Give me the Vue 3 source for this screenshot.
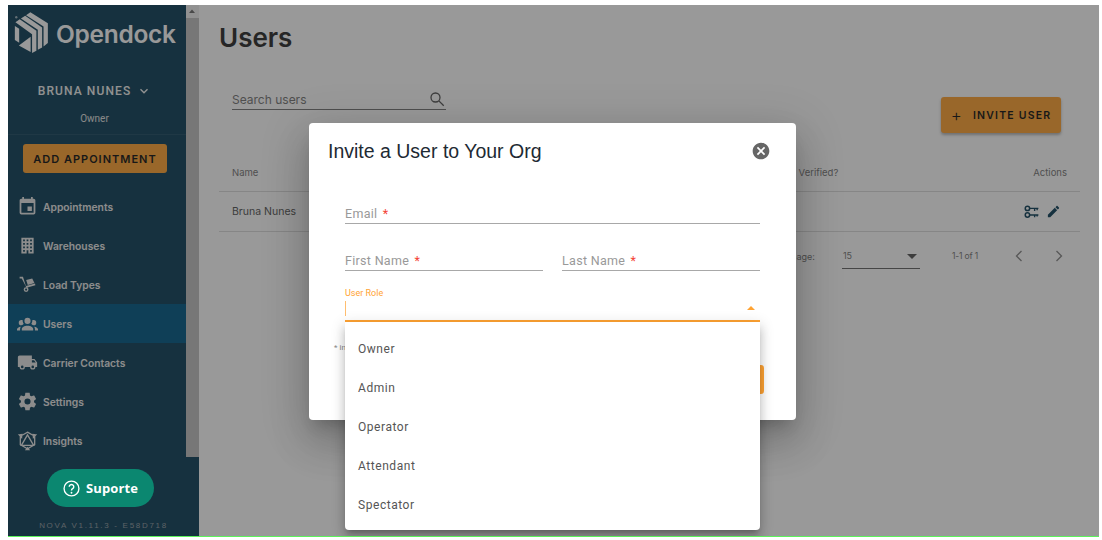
<script setup>
const navItems = [
  { label: 'Appointments', icon: 'M19,19H5V8H19M16,1V3H8V1H6V3H5C3.89,3 3,3.89 3,5V19A2,2 0 0,0 5,21H19A2,2 0 0,0 21,19V5C21,3.89 20.1,3 19,3H18V1M17,12H12V17H17V12Z' },
  { label: 'Warehouses', icon: 'M5,3V21H11V17.5H13V21H19V3H5M7,5H9V7H7V5M11,5H13V7H11V5M15,5H17V7H15V5M7,9H9V11H7V9M11,9H13V11H11V9M15,9H17V11H15V9M7,13H9V15H7V13M11,13H13V15H11V13M15,13H17V15H15V13M7,17H9V19H7V17M15,17H17V19H15V17Z' },
  { label: 'Load Types', icon: 'M3,3H6.8L10.2,13.6L20.6,10.8L21,12.8L10.9,15.6L5.4,5H3Z M10.5,6.8L17.4,5L19.9,10.2L12.3,12.5Z M10.4,15A2.8,2.8 0 1,1 10.4,20.6A2.8,2.8 0 1,1 10.4,15Z M10.4,16.6A1.2,1.2 0 1,0 10.4,19A1.2,1.2 0 1,0 10.4,16.6Z' },
  { label: 'Users', active: true, icon: 'M12,5.5A3.5,3.5 0 0,1 15.5,9A3.5,3.5 0 0,1 12,12.5A3.5,3.5 0 0,1 8.5,9A3.5,3.5 0 0,1 12,5.5M5,8C5.56,8 6.08,8.15 6.53,8.42C6.38,9.85 6.8,11.27 7.66,12.38C7.16,13.34 6.16,14 5,14A3,3 0 0,1 2,11A3,3 0 0,1 5,8M19,8A3,3 0 0,1 22,11A3,3 0 0,1 19,14C17.84,14 16.84,13.34 16.34,12.38C17.2,11.27 17.62,9.85 17.47,8.42C17.92,8.15 18.44,8 19,8M5.5,18.25C5.5,16.18 8.41,14.5 12,14.5C15.59,14.5 18.5,16.18 18.5,18.25V20H5.5V18.25M0,20V18.5C0,17.11 1.89,15.94 4.45,15.6C3.86,16.28 3.5,17.22 3.5,18.25V20H0M24,20H20.5V18.25C20.5,17.22 20.14,16.28 19.55,15.6C22.11,15.94 24,17.11 24,18.5V20Z' },
  { label: 'Carrier Contacts', icon: 'M18,18.5A1.5,1.5 0 0,1 16.5,17A1.5,1.5 0 0,1 18,15.5A1.5,1.5 0 0,1 19.5,17A1.5,1.5 0 0,1 18,18.5M19.5,9.5L21.46,12H17V9.5M6,18.5A1.5,1.5 0 0,1 4.5,17A1.5,1.5 0 0,1 6,15.5A1.5,1.5 0 0,1 7.5,17A1.5,1.5 0 0,1 6,18.5M20,8H17V4H3C1.89,4 1,4.89 1,6V17H3A3,3 0 0,0 6,20A3,3 0 0,0 9,17H15A3,3 0 0,0 18,20A3,3 0 0,0 21,17H23V12L20,8Z' },
  { label: 'Settings', icon: 'M12,15.5A3.5,3.5 0 0,1 8.5,12A3.5,3.5 0 0,1 12,8.5A3.5,3.5 0 0,1 15.5,12A3.5,3.5 0 0,1 12,15.5M19.43,12.97C19.47,12.65 19.5,12.33 19.5,12C19.5,11.67 19.47,11.34 19.43,11L21.54,9.37C21.73,9.22 21.78,8.95 21.66,8.73L19.66,5.27C19.54,5.05 19.27,4.96 19.05,5.05L16.56,6.05C16.04,5.66 15.5,5.32 14.87,5.07L14.5,2.42C14.46,2.18 14.25,2 14,2H10C9.75,2 9.54,2.18 9.5,2.42L9.13,5.07C8.5,5.32 7.96,5.66 7.44,6.05L4.95,5.05C4.73,4.96 4.46,5.05 4.34,5.27L2.34,8.73C2.21,8.95 2.27,9.22 2.46,9.37L4.57,11C4.53,11.34 4.5,11.67 4.5,12C4.5,12.33 4.53,12.65 4.57,12.97L2.46,14.63C2.27,14.78 2.21,15.05 2.34,15.27L4.34,18.73C4.46,18.95 4.73,19.03 4.95,18.95L7.44,17.94C7.96,18.34 8.5,18.68 9.13,18.93L9.5,21.58C9.54,21.82 9.75,22 10,22H14C14.25,22 14.46,21.82 14.5,21.58L14.87,18.93C15.5,18.67 16.04,18.34 16.56,17.94L19.05,18.95C19.27,19.03 19.54,18.95 19.66,18.73L21.66,15.27C21.78,15.05 21.73,14.78 21.54,14.63L19.43,12.97Z' },
  { label: 'Insights', icon: 'M12,2.5L20.2,7.2V16.8L12,21.5L3.8,16.8V7.2Z M12,5.5L19,17.5H5Z M2.5,5.5L5.5,5.2L5.2,8.5Z M21.5,5.5L18.5,5.2L18.8,8.5Z M12,20.5L13.5,22.5H10.5Z', stroke: true }
]
const roles = ['Owner', 'Admin', 'Operator', 'Attendant', 'Spectator']
</script>

<template>
  <div class="page">
    <div class="frame">
      <aside class="sidebar">
        <div class="side-scroll">
          <div class="side-content">
            <div class="brand">
              <svg class="logo" viewBox="12 8 122 130" preserveAspectRatio="none" width="35" height="43">
                <circle cx="20" cy="27" r="4" fill="#fff" opacity=".6" />
                <path d="M54,21L69,12L130,45V105L115,115V55Z" fill="#fff" />
                <path d="M36,31L51,22L110,58V118L95,125V65Z" fill="#fff" />
                <path d="M17,42L32,33L90,68V128L75,135V78Z" fill="#fff" />
                <path d="M15,53L30,62V104L15,96Z" fill="#fff" />
                <path d="M70,86V132L29,112Z" fill="#fff" />
              </svg>
              <span class="brand-name">Opendock</span>
            </div>
            <div class="user-name">
              BRUNA NUNES
              <svg viewBox="0 0 24 24" width="14" height="14"><path d="M6,9L12,15L18,9" fill="none" stroke="currentColor" stroke-width="2.4" /></svg>
            </div>
            <div class="user-role">Owner</div>
            <div class="add-wrap">
              <button class="add-btn">ADD APPOINTMENT</button>
            </div>
            <nav class="nav">
              <a v-for="item in navItems" :key="item.label" class="nav-item" :class="{ active: item.active }">
                <span class="nav-icon">
                  <svg viewBox="0 0 24 24" width="21" height="21">
                    <path v-if="item.stroke" :d="item.icon" fill="none" stroke="currentColor" stroke-width="1.5" />
                    <path v-else :d="item.icon" fill="currentColor" fill-rule="evenodd" />
                  </svg>
                </span>
                <span>{{ item.label }}</span>
              </a>
            </nav>
          </div>
          <div class="scrollbar">
            <svg viewBox="0 0 12 12" width="12" height="12"><path d="M3,8L6,4.5L9,8Z" fill="#6b6b6b" /></svg>
            <div class="thumb"></div>
          </div>
        </div>
        <div class="side-foot">
          <div class="pill-slot"></div>
          <div class="version">NOVA V1.11.3 - E58D718</div>
        </div>
      </aside>

      <main class="main">
        <h1 class="title">Users</h1>
        <div class="toolbar">
          <label class="search">
            <span>Search users</span>
            <svg viewBox="0 0 24 24" width="18" height="18"><circle cx="10" cy="10" r="6" fill="none" stroke="currentColor" stroke-width="1.7" /><path d="M14.5,14.5L21,21" stroke="currentColor" stroke-width="1.7" /></svg>
          </label>
          <button class="invite-btn"><span class="plus">+</span>INVITE USER</button>
        </div>
        <div class="table">
          <div class="thead">
            <span>Name</span>
            <span class="th-verified">Verified?</span>
            <span class="th-actions">Actions</span>
          </div>
          <div class="trow">
            <span>Bruna Nunes</span>
            <span class="row-actions">
              <svg viewBox="0 0 24 24" width="15" height="15">
                <path d="M5.5,3.5A3.5,3.5 0 1,1 5.5,10.5A3.5,3.5 0 1,1 5.5,3.5Z M5.5,14A3.5,3.5 0 1,1 5.5,21A3.5,3.5 0 1,1 5.5,14Z" fill="none" stroke="currentColor" stroke-width="2.4" />
                <path d="M9,7H23M17,7V11M21,7V10M9,17.5H23M17,17.5V21M21,17.5V20" fill="none" stroke="currentColor" stroke-width="2.2" />
              </svg>
              <svg viewBox="0 0 24 24" width="15" height="15"><path d="M20.71,7.04C21.1,6.65 21.1,6 20.71,5.63L18.37,3.29C18,2.9 17.35,2.9 16.96,3.29L15.12,5.12L18.87,8.87M3,17.25V21H6.75L17.81,9.93L14.06,6.18L3,17.25Z" fill="currentColor" /></svg>
            </span>
          </div>
          <div class="tfoot">
            <span>Rows per page:</span>
            <div class="per-page"><span>15</span><i class="tri"></i></div>
            <span class="range">1-1 of 1</span>
            <svg class="chev" viewBox="0 0 24 24" width="20" height="20"><path d="M15,6L9,12L15,18" fill="none" stroke="currentColor" stroke-width="1.6" /></svg>
            <svg class="chev" viewBox="0 0 24 24" width="20" height="20"><path d="M9,6L15,12L9,18" fill="none" stroke="currentColor" stroke-width="1.6" /></svg>
          </div>
        </div>
      </main>

      <div class="overlay"></div>

      <button class="support">
        <svg viewBox="0 0 24 24" width="17" height="17"><circle cx="12" cy="12" r="10.5" fill="none" stroke="currentColor" stroke-width="1.9" /><path d="M8.8,9.5A3.2,3.2 0 1,1 13.6,12.3C12.6,12.9 12,13.4 12,14.8" fill="none" stroke="currentColor" stroke-width="2" /><circle cx="12" cy="18" r="1.3" fill="currentColor" /></svg>
        Suporte
      </button>

      <section class="dialog">
        <header class="dialog-head">
          <h2>Invite a User to Your Org</h2>
          <svg viewBox="0 0 24 24" width="20" height="20"><path d="M12,2C17.53,2 22,6.47 22,12C22,17.53 17.53,22 12,22C6.47,22 2,17.53 2,12C2,6.47 6.47,2 12,2M15.59,7L12,10.59L8.41,7L7,8.41L10.59,12L7,15.59L8.41,17L12,13.41L15.59,17L17,15.59L13.41,12L17,8.41L15.59,7Z" fill="#666" /></svg>
        </header>
        <div class="form">
          <div class="field email">Email <b>*</b></div>
          <div class="name-row">
            <div class="field">First Name <b>*</b></div>
            <div class="field">Last Name <b>*</b></div>
          </div>
          <div class="role-field">
            <div class="role-label">User Role</div>
            <div class="role-input"><i class="cursor"></i><i class="tri up"></i></div>
          </div>
        </div>
        <footer class="dialog-foot">
          <span>* indicates required field</span>
          <button class="submit">Invite</button>
        </footer>
      </section>

      <ul class="menu">
        <li v-for="role in roles" :key="role">{{ role }}</li>
      </ul>
    </div>
  </div>
</template>

<style>
html, body { margin: 0; background: #fff; overflow: hidden; }
</style>

<style scoped>
.page {
  width: 1102px;
  height: 540px;
  box-sizing: border-box;
  padding: 5px 3px 3px 8px;
  background: #fff;
  font-family: Inter, "Liberation Sans", sans-serif;
}
.frame {
  position: relative;
  height: 100%;
  display: flex;
  box-sizing: border-box;
  border-bottom: 1px solid #5cf25c;
  overflow: hidden;
}
.overlay {
  position: absolute;
  inset: 0;
  background: rgba(33, 33, 33, .46);
}

/* sidebar */
.sidebar {
  width: 191px;
  flex: none;
  display: flex;
  flex-direction: column;
  background: #0e4059;
  color: #fff;
}
.side-scroll { height: 452px; display: flex; flex: none; overflow: hidden; }
.side-content { width: 178px; flex: none; display: flex; flex-direction: column; }
.side-content > * { flex: none; }
.brand { height: 58px; display: flex; align-items: flex-start; padding: 6px 0 0 6px; box-sizing: border-box; gap: 7px; color: #fff; }
.logo { flex: none; }
.brand-name { font-size: 24.5px; line-height: 40px; margin-top: 3px; font-weight: 600; letter-spacing: -.3px; color: #fff; }
.user-name {
  margin-top: 19px;
  padding-right: 5px;
  height: 18px;
  display: flex;
  align-items: center;
  justify-content: center;
  gap: 6px;
  font-family: Roboto, sans-serif;
  font-size: 12px;
  font-weight: 500;
  letter-spacing: 1.1px;
  color: #f0f0f0;
}
.user-role { margin-top: 12px; padding-right: 5px; text-align: center; font-size: 10px; line-height: 14px; color: #e0e0e0; font-family: Roboto, sans-serif; }
.add-wrap { margin-top: 8px; padding: 9px 0 0 15px; border-top: 1px solid rgba(255,255,255,.07); height: 53px; box-sizing: border-box; }
.add-btn {
  width: 144px;
  height: 29px;
  border: 0;
  border-radius: 3px;
  background: #ffa333;
  color: #111;
  font: 600 11px Inter, sans-serif;
  letter-spacing: 1px;
  padding: 0;
  display: block;
}
.nav { display: flex; flex-direction: column; }
.nav-item {
  height: 39px;
  flex: none;
  display: flex;
  align-items: center;
  font-size: 10.3px;
  font-weight: 600;
  color: #e8e8e8;
}
.nav-item.active { background: #005985; }
.nav-icon { width: 35px; padding-left: 3px; box-sizing: border-box; display: flex; flex: none; justify-content: center; }
.scrollbar { width: 13px; background: #f1f1f1; flex: none; display: flex; flex-direction: column; }
.thumb { flex: 1; background: #c1c1c1; margin-top: 1px; }
.side-foot { flex: 1; position: relative; display: flex; flex-direction: column; }
.pill-slot { flex: 1; }
.version {
  font-family: "Liberation Sans", sans-serif;
  font-size: 8px;
  line-height: 10px;
  letter-spacing: 1.7px;
  text-align: center;
  margin-bottom: 5px;
  color: #8f9aa1;
}
.support {
  position: absolute;
  left: 39px;
  top: 464px;
  width: 107px;
  height: 38px;
  border: 0;
  border-radius: 19px;
  background: #0b8770;
  color: #fff;
  font: 700 13px "Open Sans", sans-serif;
  letter-spacing: .1px;
  display: flex;
  align-items: center;
  justify-content: center;
  gap: 6px;
  padding: 0;
}

/* main */
.main { flex: 1; min-width: 0; background: #fff; color: #333; box-sizing: border-box; padding-left: 20px; padding-right: 19px; }
.title { margin: 0; padding-top: 17px; font-size: 26px; line-height: 32px; font-weight: 600; color: #2b2b2b; }
.toolbar { display: flex; justify-content: space-between; align-items: flex-start; padding: 35px 19px 0 13px; height: 63px; }
.search {
  width: 214px;
  height: 20px;
  display: flex;
  justify-content: space-between;
  align-items: center;
  border-bottom: 1px solid #777;
  font-size: 12px;
  color: #777;
}
.search svg { color: #555; }
.invite-btn {
  margin-top: 8px;
  width: 120px;
  height: 36px;
  border: 0;
  border-radius: 3px;
  background: #ffa333;
  color: #111;
  box-shadow: 0 2px 3px rgba(0,0,0,.3);
  font: 600 10.5px Inter, sans-serif;
  letter-spacing: 1.2px;
  padding: 0;
  display: flex;
  align-items: center;
  justify-content: center;
}
.plus { font-size: 17px; line-height: 17px; font-weight: 300; margin-right: 10px; }
.table { font-size: 9.5px; color: #777; }
.thead {
  height: 40px;
  box-sizing: border-box;
  border-bottom: 1px solid #ddd;
  display: flex;
  align-items: center;
  padding: 2px 13px 0;
}
.th-verified { margin-left: auto; margin-right: 195px; }
.trow {
  height: 40px;
  box-sizing: border-box;
  border-bottom: 1px solid #ddd;
  display: flex;
  align-items: center;
  justify-content: space-between;
  padding: 0 19px 0 13px;
  font-size: 10.5px;
  color: #555;
}
.row-actions { display: flex; gap: 7px; color: #0e4059; }
.tfoot {
  height: 48px;
  display: flex;
  align-items: center;
  justify-content: flex-end;
  padding-right: 11px;
  font-size: 9px;
  color: #777;
}
.per-page {
  width: 78px;
  height: 24px;
  margin-left: 27px;
  border-bottom: 1px solid #666;
  display: flex;
  justify-content: space-between;
  align-items: center;
  box-sizing: border-box;
  padding: 0 3px 2px 1px;
  margin-top: 1px;
}
.tri { width: 0; height: 0; border: 5px solid transparent; border-top-color: #555; border-bottom: 0; margin-top: 2px; }
.tri.up { border: 4.5px solid transparent; border-bottom-color: #ffa333; border-top: 0; }
.range { margin-left: 32px; margin-right: 31px; font-size: 8.5px; letter-spacing: -.15px; }
.chev { color: #888; }
.chev + .chev { margin-left: 20px; }

/* dialog */
.dialog {
  position: absolute;
  left: 301px;
  top: 118px;
  width: 487px;
  height: 297px;
  box-sizing: border-box;
  background: #fff;
  border-radius: 4px;
  box-shadow: 0 11px 15px -7px rgba(0,0,0,.2), 0 24px 38px 3px rgba(0,0,0,.14), 0 9px 46px 8px rgba(0,0,0,.12);
  display: flex;
  flex-direction: column;
}
.dialog-head { display: flex; align-items: center; justify-content: space-between; padding: 14px 25px 0 19px; height: 28px; }
.dialog-head h2 { margin: 0; font: 400 19.5px "Liberation Sans", sans-serif; color: #1e2a33; }
.form { padding: 0 36px; font-family: Roboto, sans-serif; }
.field {
  height: 20px;
  box-sizing: border-box;
  border-bottom: 1px solid #a8a8a8;
  font-size: 12.5px;
  line-height: 20px;
  letter-spacing: .3px;
  color: #999;
}
.field b { font-weight: 400; color: #f44336; margin-left: 2px; }
.email { margin-top: 39px; }
.name-row { display: flex; gap: 19px; margin-top: 27px; }
.name-row .field { flex: 1; }
.role-field { margin-top: 16px; }
.role-label { font-size: 9px; line-height: 12px; color: #ffa333; }
.role-input {
  height: 23px;
  box-sizing: border-box;
  border-bottom: 2px solid #ffa333;
  display: flex;
  justify-content: space-between;
  padding: 2px 5px 0 0;
}
.cursor { width: 1px; height: 15px; background: #ffa333; opacity: .7; }
.role-input .tri { margin-top: 5px; }
.dialog-foot { display: flex; justify-content: space-between; align-items: flex-start; padding: 21px 32px 0 25px; font: 8px Roboto, sans-serif; color: #888; }
.submit { width: 70px; height: 29px; margin-top: 22px; border: 0; border-radius: 3px; background: #ffa333; color: #fff; }

/* menu */
.menu {
  position: absolute;
  left: 337px;
  top: 317px;
  width: 415px;
  height: 208px;
  margin: 0;
  padding: 8px 0 5px;
  box-sizing: border-box;
  list-style: none;
  background: #fff;
  border-radius: 0 0 4px 4px;
  box-shadow: 0 5px 5px -3px rgba(0,0,0,.2), 0 8px 10px 1px rgba(0,0,0,.14), 0 3px 14px 2px rgba(0,0,0,.12);
  font-family: Roboto, sans-serif;
  font-size: 12px;
  letter-spacing: .55px;
  color: #555;
}
.menu li { height: 39px; line-height: 39px; padding-left: 13px; }
</style>
